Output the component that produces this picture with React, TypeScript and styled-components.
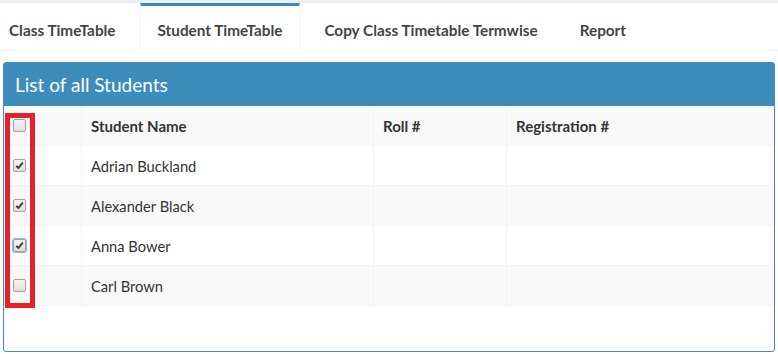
import * as React from 'react'
import styled, { createGlobalStyle } from 'styled-components'

const GlobalStyle = createGlobalStyle`
  html, body {
    margin: 0;
    padding: 0;
    background: #ecf0f5;
    font-family: Lato, "Liberation Sans", sans-serif;
  }
  * { box-sizing: border-box; }
`

const Wrapper = styled.div`
  margin-top: 3px;
  background: #fff;
  min-height: 351px;
`

const TabBar = styled.ul`
  display: flex;
  margin: 0;
  padding: 0;
  list-style: none;
  height: 48px;
  border-bottom: 1px solid #f4f4f4;
`

const Tab = styled.li<{ $active?: boolean }>`
  display: flex;
  align-items: center;
  height: ${p => (p.$active ? '48px' : '47px')};
  margin-right: 6px;
  padding: 3px 17px 0;
  font-size: 15.3px;
  font-weight: 700;
  color: #444;
  white-space: nowrap;
  border-top: 3px solid ${p => (p.$active ? '#3c8dbc' : 'transparent')};
  border-left: 1px solid ${p => (p.$active ? '#f4f4f4' : 'transparent')};
  border-right: 1px solid ${p => (p.$active ? '#f4f4f4' : 'transparent')};
  background: #fff;
  &:first-child { padding-left: 8px; }
`

const Content = styled.div`
  padding: 11px 3px 0;
`

const Panel = styled.div`
  position: relative;
  border: 1px solid #3c8dbc;
  border-radius: 3px;
  padding-bottom: 45px;
`

const PanelHeader = styled.div`
  height: 43px;
  display: flex;
  align-items: center;
  padding-left: 11px;
  background: #3c8dbc;
  color: #fff;
  font-size: 19px;
`

const Row = styled.div<{ $striped?: boolean }>`
  display: grid;
  grid-template-columns: 77px 292px 133px 1fr;
  height: 40px;
  margin-right: 1px;
  background: ${p => (p.$striped ? '#f9f9f9' : '#fff')};
  border-bottom: 1px solid #f4f4f4;
`

const Cell = styled.div<{ $head?: boolean }>`
  display: flex;
  align-items: center;
  padding: 0 9px;
  border-left: 1px solid #f4f4f4;
  font-size: ${p => (p.$head ? '15px' : '14.7px')};
  font-weight: ${p => (p.$head ? 700 : 400)};
  color: #333;
  &:first-child { border-left: none; }
`

const Box = styled.span<{ $focus?: boolean }>`
  display: inline-flex;
  align-items: center;
  justify-content: center;
  width: 13px;
  height: 13px;
  border: 1px solid #a2a2a2;
  border-radius: 2px;
  background: linear-gradient(#f4f4f4, #dedede);
  box-shadow: ${p => (p.$focus ? '0 0 0 1px #8fb3ee' : 'none')};
`

const Highlight = styled.div`
  position: absolute;
  left: 1px;
  top: 50px;
  width: 30px;
  height: 195px;
  border: 5px solid #e8202a;
  pointer-events: none;
`

const Check = ({ checked, focus }: { checked?: boolean; focus?: boolean }) => (
  <Box $focus={focus}>
    {checked && (
      <svg width="9" height="9" viewBox="0 0 9 9">
        <path d="M1.2 4.8 L3.4 7 L7.8 1.6" fill="none" stroke="#333" strokeWidth="1.8" />
      </svg>
    )}
  </Box>
)

const students = [
  { name: 'Adrian Buckland', checked: true },
  { name: 'Alexander Black', checked: true },
  { name: 'Anna Bower', checked: true, focus: true },
  { name: 'Carl Brown', checked: false },
]

export default function App() {
  return (
    <>
      <GlobalStyle />
      <Wrapper>
        <TabBar>
          <Tab>Class TimeTable</Tab>
          <Tab $active>Student TimeTable</Tab>
          <Tab>Copy Class Timetable Termwise</Tab>
          <Tab>Report</Tab>
        </TabBar>
        <Content>
          <Panel>
            <PanelHeader>List of all Students</PanelHeader>
            <Row $striped>
              <Cell $head><Check /></Cell>
              <Cell $head>Student Name</Cell>
              <Cell $head>Roll #</Cell>
              <Cell $head>Registration #</Cell>
            </Row>
            {students.map((s, i) => (
              <Row key={s.name} $striped={i % 2 === 1}>
                <Cell><Check checked={s.checked} focus={s.focus} /></Cell>
                <Cell>{s.name}</Cell>
                <Cell />
                <Cell />
              </Row>
            ))}
            <Highlight />
          </Panel>
        </Content>
      </Wrapper>
    </>
  )
}
